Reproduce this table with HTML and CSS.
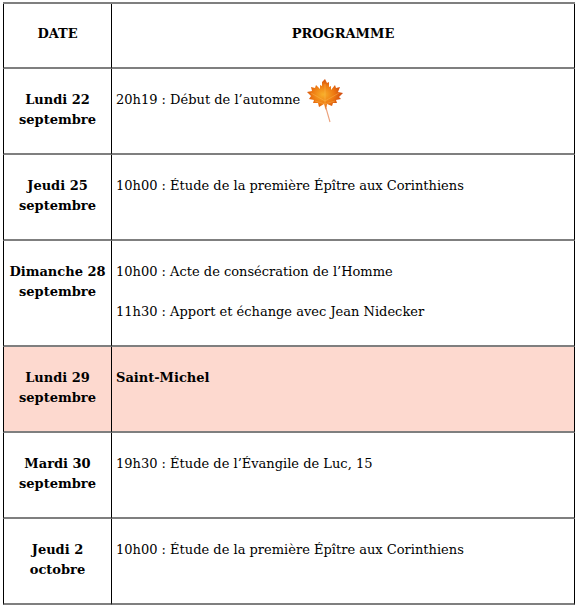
FILE: index.html
```
<!DOCTYPE html>
<html lang="fr">
<head>
<meta charset="utf-8">
<title>Programme</title>
<link rel="stylesheet" href="styles.css">
</head>
<body>
<table class="prog">
  <tr class="head">
    <th class="date">DATE</th>
    <th class="desc">PROGRAMME</th>
  </tr>
  <tr>
    <td class="date">Lundi 22<br>septembre</td>
    <td class="desc"><p>20h19 : Début de l’automne <svg class="leaf" viewBox="0 0 36 44" width="36" height="44" aria-hidden="true">
      <defs>
        <radialGradient id="lg" cx="0.45" cy="0.5" r="0.6">
          <stop offset="0" stop-color="#f8b02a"/>
          <stop offset="0.5" stop-color="#ee7a12"/>
          <stop offset="1" stop-color="#c5380c"/>
        </radialGradient>
      </defs>
      <path d="M19 29 L23 43" stroke="#eba07a" stroke-width="1.1" fill="none"/>
      <path fill="url(#lg)" d="M18 0 L20 4 L22 3 L22 8 L24 7 L24 11 L28 6 L29 9 L33 8 L31 13 L36 14 L32 18 L34 20 L29 21 L30 24 L26 24 L25 27 L20 25 L19 31 L17 25 L12 28 L11 24 L6 24 L7 21 L2 20 L4 17 L0 13 L5 12 L4 8 L8 9 L9 6 L13 10 L13 6 L15 7 L15 3 Z"/>
      <path d="M18 29 L18 5 M18 22 L32 14 M18 22 L4 14 M18 25 L8 22 M18 25 L28 22" stroke="#fbc55e" stroke-width="0.6" fill="none" opacity="0.6"/>
    </svg></p></td>
  </tr>
  <tr>
    <td class="date">Jeudi 25<br>septembre</td>
    <td class="desc"><p>10h00 : Étude de la première Épître aux Corinthiens</p></td>
  </tr>
  <tr>
    <td class="date">Dimanche 28<br>septembre</td>
    <td class="desc"><p>10h00 : Acte de consécration de l’Homme</p><p>11h30 : Apport et échange avec Jean Nidecker</p></td>
  </tr>
  <tr class="feast">
    <td class="date">Lundi 29<br>septembre</td>
    <td class="desc"><p><strong>Saint-Michel</strong></p></td>
  </tr>
  <tr>
    <td class="date">Mardi 30<br>septembre</td>
    <td class="desc"><p>19h30 : Étude de l’Évangile de Luc, 15</p></td>
  </tr>
  <tr>
    <td class="date">Jeudi 2<br>octobre</td>
    <td class="desc"><p>10h00 : Étude de la première Épître aux Corinthiens</p></td>
  </tr>
</table>
</body>
</html>
```
FILE: styles.css
```
html, body {
  margin: 0;
  padding: 0;
  background: #fff;
}
body {
  padding: 2px 0 0 3px;
  font-family: "DejaVu Serif", "Liberation Serif", serif;
  font-size: 13px;
  line-height: 20px;
  color: #000;
}
.prog {
  width: 572px;
  border-collapse: separate;
  border-spacing: 0;
  border-top: 2px solid #7f7f7f;
  table-layout: fixed;
}
.prog th, .prog td {
  border-bottom: 2px solid #7f7f7f;
  border-right: 1px solid #000;
  padding: 21px 4px 23px;
  vertical-align: top;
  text-align: left;
  font-weight: normal;
}
.prog .date {
  width: 99px;
  border-left: 1px solid #000;
  text-align: center;
  font-weight: bold;
  padding-left: 4px;
  padding-right: 4px;
}
.prog .head th {
  height: 20px;
  padding-top: 20px;
  padding-bottom: 23px;
  font-weight: bold;
  text-align: center;
}
.prog .desc {
  padding-left: 4px;
}
.prog .desc p {
  margin: 0;
}
.prog .desc p + p {
  margin-top: 20px;
}
.feast td {
  background: #fdd9cf;
}
.leaf {
  display: inline-block;
  vertical-align: middle;
  margin: -12px 0 -12px 3px;
}
```
